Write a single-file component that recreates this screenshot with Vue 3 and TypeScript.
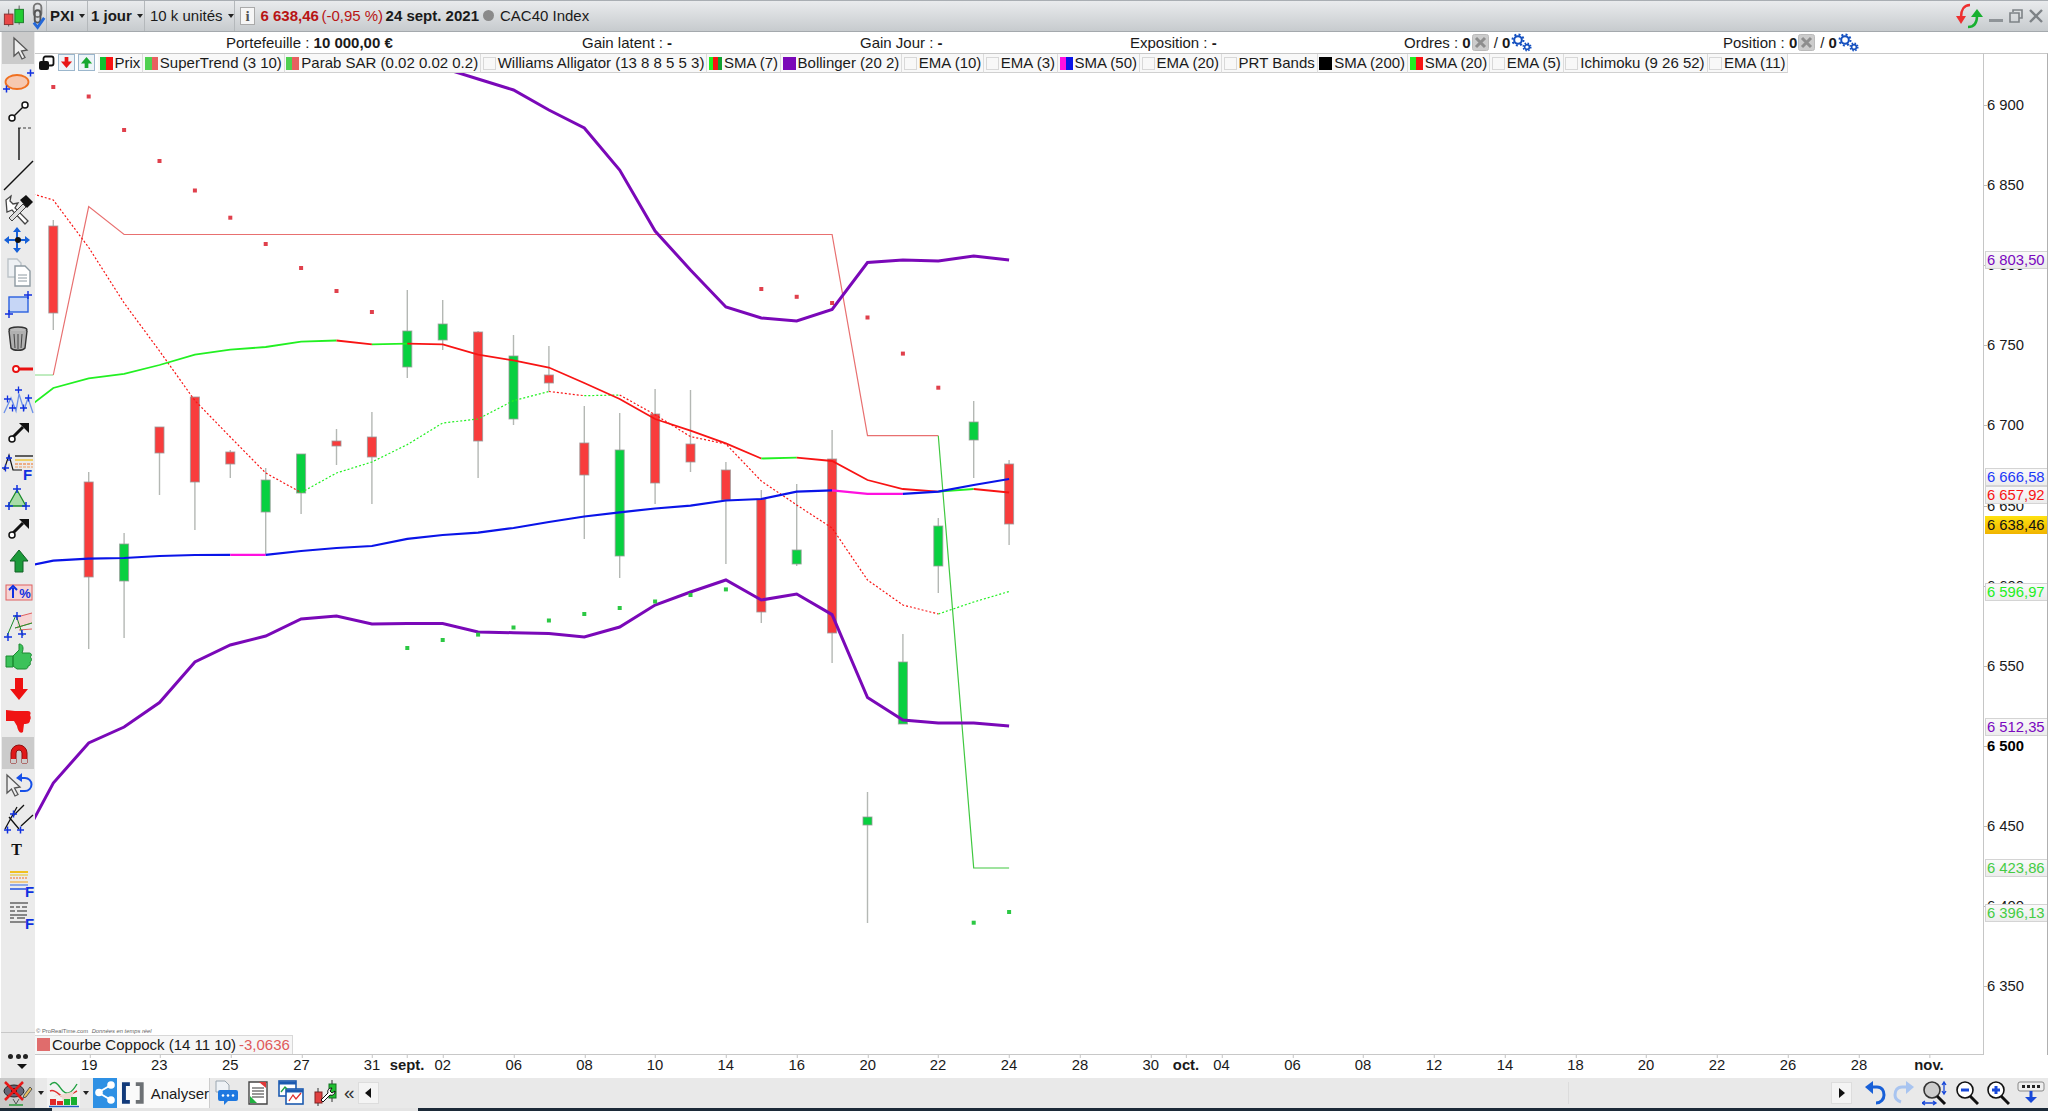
<template>
  <div class="screen">
    <div class="topbar">
      <div class="top-cell icons-cell">
        <svg width="24" height="30" viewBox="0 0 24 30"><path d="M7 8v18M18 4v20" stroke="#555" /><rect x="2.5" y="13" width="9" height="11" fill="#e84848" stroke="#8a3030" /><rect x="13.5" y="8" width="9" height="14" fill="#22cc33" stroke="#1c7a2a" /></svg>
        <svg class="link-ic" width="18" height="30" viewBox="0 0 18 30"><rect x="5" y="2" width="8" height="14" rx="4" fill="none" stroke="#777" stroke-width="2" /><rect x="6" y="9" width="6" height="13" rx="3" fill="none" stroke="#555" stroke-width="2" /><path d="M5 22l4 5 7-10" fill="none" stroke="#2468d8" stroke-width="3" /></svg>
      </div>
      <div class="top-cell sym"><b>PXI</b><i class="caret"></i></div>
      <div class="top-cell tf"><b>1 jour</b><i class="caret"></i></div>
      <div class="top-cell units">10 k unités<i class="caret"></i></div>
      <div class="quote">
        <span class="info">i</span>
        <b class="down">6 638,46</b>
        <span class="down pct">(-0,95 %)</span>
        <b>24 sept. 2021</b>
        <span class="dot"></span>
        <span>CAC40 Index</span>
      </div>
      <div class="win-btns">
        <svg width="27" height="28" viewBox="0 0 27 28"><path d="M14 3C8 3 5 8 5 15" fill="none" stroke="#ee3030" stroke-width="2.5" /><path d="M0 14h10l-5 8z" fill="#ee3030" /><path d="M12 25c6 0 9-4 9-11" fill="none" stroke="#18b030" stroke-width="2.5" /><path d="M15 15h12l-6-8z" fill="#18b030" /></svg>
        <svg width="14" height="14" viewBox="0 0 14 14"><rect y="10" width="14" height="3" fill="#8f9498" /></svg>
        <svg width="14" height="14" viewBox="0 0 14 14"><path d="M4 3V1h9v8h-3M1 4h9v9H1z" fill="none" stroke="#7d8286" stroke-width="1.6" /></svg>
        <svg width="14" height="14" viewBox="0 0 14 14"><path d="M1 1l12 12M13 1L1 13" stroke="#7d8286" stroke-width="2.4" /></svg>
      </div>
    </div>

    <div class="main">
      <div class="toolbar">
        <div class="tools">
          <div class="tool active"><svg viewBox="0 0 32 32"><path d="M12 6v18l4.500-4 3.500 7 3-1.500-3.500-6.500 5.500-1z" fill="#eee" stroke="#555" stroke-width="1.3" /></svg></div>
          <div class="tool"><svg viewBox="0 0 32 32"><ellipse cx="16" cy="18" rx="11.500" ry="7" fill="#f6c8b0" stroke="#f07020" stroke-width="1.800" /><path d="M26 9h7M29.500 5.500v7M2 25h7M5.500 21.500v7" stroke="#1030e0" stroke-width="1.500" /></svg></div>
          <div class="tool"><svg viewBox="0 0 32 32"><path d="M13 20l9-9" stroke="#111" stroke-width="1.500" /><circle cx="11" cy="22" r="3" fill="#fff" stroke="#111" stroke-width="1.500" /><circle cx="24" cy="9" r="3" fill="#fff" stroke="#111" stroke-width="1.500" /></svg></div>
          <div class="tool"><svg viewBox="0 0 32 32"><path d="M17 0h14" stroke="#777" stroke-width="1.400" stroke-dasharray="3 2" /><path d="M18 0v32" stroke="#111" stroke-width="1.400" /></svg></div>
          <div class="tool"><svg viewBox="0 0 32 32"><path d="M3 30L32 1" stroke="#111" stroke-width="1.400" /></svg></div>
          <div class="tool"><svg viewBox="0 0 32 32"><path d="M5 8l5-4-1 5 3 3 5-1-3 5 13 13-3 3L11 18l-5 2z" fill="#fff" stroke="#444" stroke-width="1.300" /><path d="M8 26L22 12l3 3-14 14z" fill="#ddd" stroke="#444" /><path d="M19 8l6-5 7 7-6 6z" fill="#111" /></svg></div>
          <div class="tool"><svg viewBox="0 0 32 32"><path d="M16 3l4 5h-8zM16 29l4-5h-8zM3 16l5-4v8zM29 16l-5-4v8z" fill="#1660d8" /><path d="M8 16h16M16 8v16" stroke="#1660d8" stroke-width="2" /><circle cx="17" cy="16" r="3" fill="#111" /></svg></div>
          <div class="tool"><svg viewBox="0 0 32 32"><path d="M7 3h9l4 4v14H7z" fill="#eef1f4" stroke="#bcc3c8" stroke-width="1.400" /><path d="M14 10h10l5 5v15H14z" fill="#fff" stroke="#8e9aa2" stroke-width="1.400" /><path d="M17 19h9M17 22h9M17 25h9" stroke="#8e9aa2" /></svg></div>
          <div class="tool"><svg viewBox="0 0 32 32"><rect x="8" y="8" width="19" height="15" fill="#c6d6f6" stroke="#2a60e0" stroke-width="1.400" /><path d="M23 6h8M27 2v8M4 25h8M8 21v8" stroke="#1030e0" stroke-width="1.400" /></svg></div>
          <div class="tool"><svg viewBox="0 0 32 32"><ellipse cx="17" cy="9" rx="9" ry="3" fill="#bbb" stroke="#333" stroke-width="1.400" /><path d="M8 10l2 17c2 3 12 3 14 0l2-17" fill="#b0b0b0" stroke="#333" stroke-width="1.400" /><path d="M13 13l1 14M17 13v15M21 13l-1 14" stroke="#444" /></svg></div>
          <div class="tool"><svg viewBox="0 0 32 32"><path d="M15 16h17" stroke="#e81010" stroke-width="3" /><circle cx="15" cy="16" r="3" fill="#fff" stroke="#e81010" stroke-width="1.800" /></svg></div>
          <div class="tool"><svg viewBox="0 0 32 32"><path d="M3 28L10 13l5 13 3-17 5 16 4-12 5 15" fill="none" stroke="#6c90e8" stroke-width="1.300" /><path d="M3 14h7M6.500 10.500v7M8 23h7M11.500 19.500v7M14 5h7M17.500 1.500v7M19 23h7M22.500 19.500v7M24 13h7M27.500 9.500v7" stroke="#1030e0" stroke-width="1.300" /></svg></div>
          <div class="tool"><svg viewBox="0 0 32 32"><path d="M12 20L22 10" stroke="#111" stroke-width="3" /><path d="M18 6h10v10z" fill="#111" /><circle cx="11" cy="22" r="3" fill="#fff" stroke="#111" stroke-width="1.500" /></svg></div>
          <div class="tool"><svg viewBox="0 0 32 32"><path d="M3 21L8 6l4 15h9" fill="none" stroke="#111" stroke-width="1.200" /><path d="M1 19h7M4.500 15.500v7M5 9h6M8 6v6" stroke="#1030e0" stroke-width="1.300" /><path d="M14 7h18" stroke="#111" stroke-width="1.300" /><path d="M14 11h18" stroke="#f0c020" stroke-width="1.300" /><path d="M14 15h18" stroke="#f07020" stroke-width="1.200" stroke-dasharray="3 1" /><path d="M14 18h18" stroke="#f0a060" stroke-width="1.200" stroke-dasharray="3 1" /><text x="22" y="31" class="f-mark">F</text></svg></div>
          <div class="tool"><svg viewBox="0 0 32 32"><path d="M16 9l9 16H7z" fill="#a8dca8" stroke="#1a8a2a" stroke-width="1.300" /><path d="M12 8h8M16 4v8M4 25h8M8 21v8M21 25h8M25 21v8" stroke="#1030e0" stroke-width="1.500" /></svg></div>
          <div class="tool"><svg viewBox="0 0 32 32"><path d="M12 20L22 10" stroke="#111" stroke-width="3" /><path d="M18 6h10v10z" fill="#111" /><circle cx="11" cy="22" r="3" fill="#fff" stroke="#111" stroke-width="1.500" /></svg></div>
          <div class="tool"><svg viewBox="0 0 32 32"><path d="M18 5l9 11h-5v11h-8V16H9z" fill="#1c9a3a" stroke="#106024" /></svg></div>
          <div class="tool"><svg viewBox="0 0 32 32"><rect x="5" y="8" width="26" height="15" fill="#f6d4d4" stroke="#e06060" stroke-width="1" /><path d="M12 21V11" stroke="#1030e0" stroke-width="2" /><path d="M8 13l4-4 4 4" fill="none" stroke="#1030e0" stroke-width="2" /><text x="24" y="21" class="pct-mark">%</text></svg></div>
          <div class="tool"><svg viewBox="0 0 32 32"><path d="M16 8l15-4v10L16 20z" fill="#f6d4d4" /><path d="M16 8l15-4M14 19l17-5M18 21l13-1" stroke="#e06060" /><path d="M14 19l17-5" stroke="#1a9a2a" /><path d="M6 27L15 6l7 21" fill="none" stroke="#1a8a2a" /><path d="M12 7h8M16 3v8M3 28h8M7 24v8M17 25h8M21 21v8" stroke="#1030e0" stroke-width="1.400" /></svg></div>
          <div class="tool"><svg viewBox="0 0 32 32"><path d="M5 15h7v11H5zM12 15l6-6V3c4 0 5 4 3 9h7c3 0 3 3 1 4 2 1 2 4 0 5 1 2 0 4-2 4 0 2-1 3-3 3H16l-4-3z" fill="#3cc25a" stroke="#1a8a30" /></svg></div>
          <div class="tool"><svg viewBox="0 0 32 32"><path d="M18 27l9-11h-5V5h-8v11H9z" fill="#ee1010" /></svg></div>
          <div class="tool"><svg viewBox="0 0 32 32"><path d="M5 5l9 1 13 0c3 0 3 3 2 4 1 2 1 4 0 5 0 3-2 4-6 4l-1 8c-3 2-5-1-6-6l-3-5H5z" fill="#f01414" /></svg></div>
          <div class="tool active"><svg viewBox="0 0 32 32"><path d="M9 26V16a8 8 0 0 1 16 0v10h-5V16a3 3 0 0 0-6 0v10z" fill="#e01818" stroke="#901010" /><path d="M9 22h5v4H9zM20 22h5v4h-5z" fill="#ccc" /></svg></div>
          <div class="tool"><svg viewBox="0 0 32 32"><path d="M6 6v18l4.500-4 3.500 7 3-1.500-3.500-6.500 5.500-1z" fill="#eee" stroke="#555" stroke-width="1.300" /><path d="M18 9h6a6 6 0 0 1 0 13h-5" fill="none" stroke="#1650e8" stroke-width="2" /><path d="M21 4l-6 5 6 4z" fill="#1650e8" /></svg></div>
          <div class="tool"><svg viewBox="0 0 32 32"><path d="M4 27L16 5M8 15l10 12M12 14L23 3M20 24L32 13" stroke="#111" stroke-width="1.300" /><path d="M9 12h7M12.500 8.500v7M3 28h7M6.500 24.500v7M16 28h7M19.500 24.500v7" stroke="#1030e0" stroke-width="1.500" /></svg></div>
          <div class="tool"><span class="t-glyph">T</span></div>
          <div class="tool"><svg viewBox="0 0 32 32"><path d="M9 6h18" stroke="#f0c020" stroke-width="2" /><path d="M9 9h18" stroke="#e8d060" stroke-width="1.500" /><path d="M9 12h18" stroke="#f07020" stroke-width="1.200" stroke-dasharray="2 1" /><path d="M9 16h18" stroke="#f0b040" stroke-width="1.200" /><path d="M9 19h18" stroke="#6c90e8" stroke-width="1.500" /><path d="M9 23h16" stroke="#2050e0" stroke-width="1.500" /><text x="24" y="31" class="f-mark">F</text></svg></div>
          <div class="tool"><svg viewBox="0 0 32 32"><path d="M9 5h18M9 9h4M15 9h4M21 9h5M9 13h5M16 13h10M9 17h17M9 20h4M16 20h8M9 24h16" stroke="#222" stroke-width="1.200" /><text x="24" y="31" class="f-mark">F</text></svg></div>
        </div>
        <div class="more">
          <div class="more-dots"><i></i><i></i><i></i></div>
          <i class="more-caret"></i>
        </div>
      </div>

      <div class="content">
        <div class="stats">
          <div class="stat">Portefeuille : <b>10 000,00 €</b></div>
          <div class="stat">Gain latent : <b>-</b></div>
          <div class="stat">Gain Jour : <b>-</b></div>
          <div class="stat">Exposition : <b>-</b></div>
          <div class="stat">Ordres : <b>0</b>
            <svg class="xbox" width="17" height="17" viewBox="0 0 17 17"><rect x=".5" y=".5" width="16" height="16" rx="2" fill="#ccc" stroke="#bbb" /><path d="M4 4l9 9M13 4l-9 9" stroke="#8e8e8e" stroke-width="3" /></svg>
            <span class="slash">/ <b>0</b></span>
            <svg width="22" height="19" viewBox="0 0 22 19"><circle cx="8" cy="7" r="3.800" fill="none" stroke="#1450c0" stroke-width="2" /><circle cx="8" cy="7" r="5.500" fill="none" stroke="#1450c0" stroke-width="2" stroke-dasharray="2 2.300" /><circle cx="17" cy="14" r="2.400" fill="none" stroke="#1450c0" stroke-width="1.600" /><circle cx="17" cy="14" r="3.800" fill="none" stroke="#1450c0" stroke-width="1.500" stroke-dasharray="1.500 1.500" /></svg>
          </div>
          <div class="stat">Position : <b>0</b>
            <svg class="xbox" width="17" height="17" viewBox="0 0 17 17"><rect x=".5" y=".5" width="16" height="16" rx="2" fill="#ccc" stroke="#bbb" /><path d="M4 4l9 9M13 4l-9 9" stroke="#8e8e8e" stroke-width="3" /></svg>
            <span class="slash">/ <b>0</b></span>
            <svg width="22" height="19" viewBox="0 0 22 19"><circle cx="8" cy="7" r="3.800" fill="none" stroke="#1450c0" stroke-width="2" /><circle cx="8" cy="7" r="5.500" fill="none" stroke="#1450c0" stroke-width="2" stroke-dasharray="2 2.300" /><circle cx="17" cy="14" r="2.400" fill="none" stroke="#1450c0" stroke-width="1.600" /><circle cx="17" cy="14" r="3.800" fill="none" stroke="#1450c0" stroke-width="1.500" stroke-dasharray="1.500 1.500" /></svg>
          </div>
        </div>

        <div class="work">
          <div class="chart-col">
            <div class="legend">
              <svg class="win-ic" width="17" height="17" viewBox="0 0 17 17"><rect x="5.500" y="1.500" width="10" height="9" rx="2" fill="#fff" stroke="#111" stroke-width="1.800" /><rect x="1" y="6" width="10" height="9" rx="2" fill="#111" /></svg>
              <span class="leg-btn"><svg width="14" height="14" viewBox="0 0 14 14"><path d="M5 1h4v5h4l-6 7-6-7h4z" fill="#e81818" /></svg></span>
              <span class="leg-btn"><svg width="14" height="14" viewBox="0 0 14 14"><path d="M5 13h4V8h4L7 1 1 8h4z" fill="#18a830" /></svg></span>
              <div v-for="item in legendItems" :key="item.label" class="leg-item">
                <span class="swatch" :class="{ empty: !item.swatch }" :style="{ background: item.swatch }"></span>{{ item.label }}
              </div>
            </div>
            <div class="pane">
              <svg class="plot" width="1948" height="981" viewBox="35 73 1948 981">
                <g v-for="(c, i) in candles" :key="i">
                  <path :d="`M${xOf(i)} ${c[0]}V${c[3]}`" stroke="#b4b8b4" stroke-width="1.400" />
                  <rect
                    :x="xOf(i) - 4.500"
                    :y="c[1]"
                    width="9"
                    :height="c[2] - c[1]"
                    :fill="c[4] === 'r' ? '#f83c3c' : '#08d040'"
                    stroke="#9a9a9a"
                    stroke-opacity=".8"
                  />
                </g>
                <polyline
                  v-for="(s, i) in lines"
                  :key="'l' + i"
                  :points="s.points"
                  :stroke="s.color"
                  :stroke-width="s.width"
                  :stroke-dasharray="s.dash"
                  fill="none"
                />
                <rect
                  v-for="(d, i) in sarDots"
                  :key="'d' + i"
                  :x="xOf(d[0]) - 2"
                  :y="d[1] - 2"
                  width="4"
                  height="4"
                  :fill="d[2] === 'r' ? '#e0404c' : '#2cc844'"
                />
              </svg>
              <div class="credit">© ProRealTime.com <em>Données en temps réel</em></div>
              <div class="coppock">
                <span class="cop-swatch"></span>Courbe Coppock (14 11 10)<span class="cop-val">-3,0636</span>
              </div>
            </div>
          </div>
          <div class="axis">
            <div v-for="p in priceTicks" :key="p.label" class="tick" :class="{ strong: p.strong }" :style="{ top: p.y - 54 + 'px' }">
              {{ p.label }}
            </div>
            <div
              v-for="t in priceTags"
              :key="t.label"
              class="tag"
              :class="{ last: t.last }"
              :style="{ top: t.y - 54 + 'px', color: t.color }"
            >
              {{ t.label }}
            </div>
          </div>
        </div>

        <div class="dates">
          <span v-for="d in dates" :key="d.x" class="date" :class="{ month: d.month }" :style="{ left: d.x - 35 + 'px' }">{{ d.label }}</span>
        </div>
      </div>
    </div>

    <div class="bottombar">
      <div class="bot-eye">
        <svg width="33" height="29" viewBox="0 0 33 29"><ellipse cx="13" cy="12" rx="10" ry="6" fill="#667" stroke="#222" /><circle cx="13" cy="12" r="3" fill="#111" /><path d="M4 3l18 18M22 3L4 21" stroke="#e81818" stroke-width="2.500" /><path d="M23 16l6-8 2 2-6 8-3 1z" fill="#e8c060" stroke="#555" /><path d="M8 26h14" stroke="#2a9a3a" stroke-width="1.500" /><path d="M12 20l3 5 3-5" fill="none" stroke="#555" /></svg>
      </div>
      <i class="caret bot-caret"></i>
      <div class="bot-chart">
        <svg width="30" height="29" viewBox="0 0 30 29"><path d="M1 6c6-7 9 2 13 6s8 3 14-7" fill="none" stroke="#1fa040" stroke-width="1.400" /><path d="M1 12c6-3 10 7 15 6s8-4 12-6" fill="none" stroke="#e03030" stroke-width="1.400" /><path d="M4 18c5-4 9-2 10 4h10c-1-6 0-8 2-10" fill="#f0d8d0" /><rect x="1" y="20" width="6" height="6" fill="#e02828" /><rect x="8" y="22" width="6" height="4" fill="#e02828" /><rect x="15" y="20" width="6" height="6" fill="#18b030" /><rect x="22" y="18" width="6" height="8" fill="#18b030" /><path d="M0 27.500h30" stroke="#2060c0" stroke-width="1.500" /></svg>
      </div>
      <i class="caret bot-caret wide"></i>
      <div class="bot-share">
        <svg width="24" height="29" viewBox="0 0 24 29"><path d="M6 14L18 7M6 15l12 7" stroke="#fff" stroke-width="2" /><circle cx="6" cy="14.500" r="3.800" fill="#fff" /><circle cx="18" cy="7" r="3.800" fill="#fff" /><circle cx="18" cy="22" r="3.800" fill="#fff" /></svg>
      </div>
      <div class="bot-analyse">
        <svg width="26" height="26" viewBox="0 0 26 26"><path d="M10 2H2v22h8v-4H6V6h4z" fill="#123a7a" /><path d="M16 2h8v22h-8v-4h4V6h-4z" fill="#6c7074" /></svg>
        <span>Analyser</span>
      </div>
      <div class="bot-icons">
        <svg width="24" height="26" viewBox="0 0 24 26"><path d="M2 1h9l4 4v7H2z" fill="#eef2f6" stroke="#9aa6b0" /><path d="M6 10h16a2 2 0 0 1 2 2v7a2 2 0 0 1-2 2h-8l-4 4v-4H6a2 2 0 0 1-2-2v-7a2 2 0 0 1 2-2z" fill="#1e78e0" /><circle cx="9" cy="15.500" r="1.300" fill="#fff" /><circle cx="14" cy="15.500" r="1.300" fill="#fff" /><circle cx="19" cy="15.500" r="1.300" fill="#fff" /></svg>
        <svg width="20" height="26" viewBox="0 0 20 26"><path d="M1 2h18v22H1z" fill="#fff" stroke="#444" stroke-width="1.400" /><path d="M4 8h12M4 11h12M4 14h12M4 17h12" stroke="#333" stroke-width="1.200" /><path d="M11 2h7v6z" fill="#e03838" /><path d="M2 23v-7l7 7z" fill="#20b040" /></svg>
        <svg width="26" height="26" viewBox="0 0 26 26"><rect x="1" y="1" width="17" height="15" fill="#fff" stroke="#1c5ab0" stroke-width="1.600" /><path d="M1 3h17" stroke="#1c5ab0" stroke-width="3" /><rect x="8" y="9" width="17" height="15" fill="#fff" stroke="#1c5ab0" stroke-width="1.600" /><path d="M8 11h17" stroke="#1c5ab0" stroke-width="3" /><path d="M11 21l4-6 3 4 5-6" fill="none" stroke="#e03030" stroke-width="1.300" /><path d="M3 12l4-5 2 2" fill="none" stroke="#20a040" stroke-width="1.300" /></svg>
        <svg width="24" height="26" viewBox="0 0 24 26"><rect x="1" y="12" width="7" height="11" fill="#e04040" stroke="#802020" /><rect x="15" y="4" width="7" height="14" fill="#20c030" stroke="#107020" /><path d="M18 0v4M18 18v4M4 8v4M4 23v3" stroke="#333" /><path d="M7 20l7-7c-1-3 1-5 4-5l-2 3 2 2 3-2c0 3-2 5-5 4l-7 7z" fill="#fff" stroke="#111" /></svg>
      </div>
      <span class="chev">«</span>
      <div class="scrollbar">
        <span class="scroll-btn"><i class="arrow-left"></i></span>
        <div class="track"><div class="thumb-mark"></div></div>
        <span class="scroll-btn"><i class="arrow-right"></i></span>
      </div>
      <div class="bot-right">
        <svg width="22" height="24" viewBox="0 0 22 24"><path d="M4 6h9c5 0 7 4 7 8s-3 8-8 8" fill="none" stroke="#1860d8" stroke-width="3" /><path d="M9 0L1 6l8 7z" fill="#1860d8" /></svg>
        <svg width="22" height="24" viewBox="0 0 22 24"><path d="M18 6H9c-5 0-7 4-7 8s3 6 6 7" fill="none" stroke="#a8c4f0" stroke-width="3" /><path d="M13 0l8 6-8 7z" fill="#a8c4f0" /></svg>
        <svg width="26" height="26" viewBox="0 0 26 26"><circle cx="10" cy="10" r="8" fill="#ccc" stroke="#333" stroke-width="1.600" /><path d="M15 16l8 8" stroke="#111" stroke-width="3" /><path d="M22 3v10M20 5l2-3 2 3M20 11l2 3 2-3M1 23h12M3 21l-3 2 3 2M11 21l3 2-3 2" fill="none" stroke="#1848d8" stroke-width="1.300" /></svg>
        <svg width="24" height="26" viewBox="0 0 24 26"><circle cx="10" cy="10" r="8" fill="#fff" stroke="#111" stroke-width="1.600" /><path d="M6 10h8" stroke="#1848d8" stroke-width="3" /><path d="M15 16l8 8" stroke="#111" stroke-width="3" /></svg>
        <svg width="24" height="26" viewBox="0 0 24 26"><circle cx="10" cy="10" r="8" fill="#fff" stroke="#111" stroke-width="1.600" /><path d="M6 10h8M10 6v8" stroke="#1848d8" stroke-width="3" /><path d="M15 16l8 8" stroke="#111" stroke-width="3" /></svg>
        <svg width="28" height="26" viewBox="0 0 28 26"><rect x="1" y="2" width="26" height="9" rx="2" fill="#eee" stroke="#888" /><path d="M5 5h3v3H5zM10 5h3v3h-3zM15 5h3v3h-3zM20 5h3v3h-3z" fill="#222" /><path d="M14 11v7" stroke="#1848d8" stroke-width="3" /><path d="M8 17h12l-6 6z" fill="#1848d8" /></svg>
      </div>
    </div>
    <div class="strip"><div class="strip-light"></div></div>
  </div>
</template>

<script setup lang="ts">
type Candle = [number, number, number, number, 'r' | 'g']

function xOf(i: number) {
  return 53.3 + 35.4 * i
}

// wick top, body top, body bottom, wick bottom
const candles: Candle[] = [
  [220, 226, 313, 330, 'r'],
  [472, 482, 577, 649, 'r'],
  [533, 544, 581, 638, 'g'],
  [427, 427, 453, 495, 'r'],
  [397, 397, 482, 530, 'r'],
  [450, 452, 464, 478, 'r'],
  [468, 480, 512, 554, 'g'],
  [454, 454, 493, 514, 'g'],
  [429, 441, 446, 465, 'r'],
  [412, 437, 457, 504, 'r'],
  [290, 331, 367, 378, 'g'],
  [300, 324, 340, 350, 'g'],
  [331, 332, 441, 478, 'r'],
  [335, 356, 419, 425, 'g'],
  [346, 375, 383, 391, 'r'],
  [406, 443, 475, 539, 'r'],
  [413, 450, 556, 578, 'g'],
  [389, 414, 483, 504, 'r'],
  [390, 444, 462, 472, 'r'],
  [462, 470, 500, 564, 'r'],
  [490, 499, 612, 623, 'r'],
  [484, 550, 564, 566, 'g'],
  [430, 459, 633, 663, 'r'],
  [792, 817, 825, 923, 'g'],
  [634, 662, 724, 724, 'g'],
  [518, 526, 566, 593, 'g'],
  [401, 422, 440, 478, 'g'],
  [460, 464, 524, 545, 'r'],
]

const GREEN = '#22f022'
const RED = '#f81414'
const BLUE = '#0a14e8'
const PINK = '#ff10e0'
const PURPLE = '#7a08b8'

function seg(color: string, start: number, ys: number[], width: number, dash?: string) {
  return {
    color,
    width,
    dash,
    points: ys.map((y, k) => `${xOf(start + k)},${y}`).join(' '),
  }
}

const lines = [
  // SuperTrend
  seg('#80d880', -1, [375, 375], 1),
  seg('#e87070', 0, [375, 206.6, 234.5, ...Array(20).fill(234.5), 435.7, 435.7, 435.7], 1.2),
  seg('#40c840', 25, [435.7, 868, 868], 1.2),
  // SMA 7
  seg(RED, -1, [189.5, 200, 247.5, 303, 351, 400.6, 437, 473, 492.5], 1.2, '2 2'),
  seg(GREEN, 7, [492.5, 473, 462, 444.6, 423, 419, 400.6, 391.5], 1.2, '2 2'),
  seg(RED, 14, [391.5, 395.7], 1.2, '2 2'),
  seg(GREEN, 15, [395.7, 395], 1.2, '2 2'),
  seg(RED, 16, [395, 414.7, 436.6, 444, 481, 505, 528, 580, 605, 614], 1.2, '2 2'),
  seg(GREEN, 25, [614, 602, 591.5], 1.2, '2 2'),
  // SMA 20
  seg(GREEN, -1, [415.4, 388, 378.4, 373.8, 365, 354.7, 349.7, 347, 341.7, 340.5], 1.8),
  seg(RED, 8, [340.5, 344.3], 1.8),
  seg(GREEN, 9, [344.3, 343.6], 1.8),
  seg(RED, 10, [343.6, 344.3, 354.7, 360.4, 367.5, 383, 399, 419, 430.7, 443.3, 458.5], 1.8),
  seg(GREEN, 20, [458.5, 457.6], 1.8),
  seg(RED, 21, [457.6, 461, 480, 489, 491.7], 1.8),
  seg(GREEN, 25, [491.7, 489], 1.8),
  seg(RED, 26, [489, 492.5], 1.8),
  // SMA 50
  seg(BLUE, -1, [568, 560.6, 558.7, 558, 556, 555, 554.8], 2.2),
  seg(PINK, 5, [554.8, 554.8], 2.2),
  seg(BLUE, 6, [554.8, 551, 548, 546, 538.8, 535, 532.6, 528, 522, 516.5, 512.3, 508.5, 505.6, 500.5, 499, 491.7, 490.4], 2.2),
  seg(PINK, 22, [490.4, 493.8, 493.8], 2.2),
  seg(BLUE, 24, [493.8, 491.7, 485, 479], 2.2),
  // Bollinger
  seg(PURPLE, 11, [68, 79, 90, 110, 128, 170, 231, 270, 307, 318, 321, 309.5, 262.5, 260, 261, 256, 260], 3),
  seg(PURPLE, -1, [849, 783, 743, 727, 702.6, 662, 645, 636, 619, 616, 624, 623.6, 623.6, 632, 632.7, 633.5, 637, 627, 605, 592, 580, 600, 594, 614.6, 697.5, 720, 723, 723, 726], 3),
]

const sarDots: [number, number, 'r' | 'g'][] = [
  [0, 87, 'r'], [1, 96.5, 'r'], [2, 130, 'r'], [3, 161, 'r'], [4, 190.5, 'r'],
  [5, 217.7, 'r'], [6, 244, 'r'], [7, 268, 'r'], [8, 291, 'r'], [9, 312, 'r'],
  [10, 648, 'g'], [11, 640, 'g'], [12, 634.6, 'g'], [13, 627.5, 'g'], [14, 620.5, 'g'],
  [15, 614, 'g'], [16, 608, 'g'], [17, 601.5, 'g'], [18, 595, 'g'], [19, 589.4, 'g'],
  [20, 289, 'r'], [21, 296.8, 'r'], [22, 303, 'r'], [23, 317.5, 'r'], [24, 353.6, 'r'], [25, 387.7, 'r'],
  [26, 922.7, 'g'], [27, 912, 'g'],
]

const legendItems = [
  { label: 'Prix', swatch: 'linear-gradient(90deg,#10c030 50%,#f81414 50%)' },
  { label: 'SuperTrend (3 10)', swatch: 'linear-gradient(90deg,#50d050 50%,#e86060 50%)' },
  { label: 'Parab SAR (0.02 0.02 0.2)', swatch: 'linear-gradient(90deg,#50d050 50%,#e86060 50%)' },
  { label: 'Williams Alligator (13 8 8 5 5 3)', swatch: '' },
  { label: 'SMA (7)', swatch: 'linear-gradient(90deg,#22f022 33%,#f81414 33%,#f81414 66%,#10a030 66%)' },
  { label: 'Bollinger (20 2)', swatch: '#7a08b8' },
  { label: 'EMA (10)', swatch: '' },
  { label: 'EMA (3)', swatch: '' },
  { label: 'SMA (50)', swatch: 'linear-gradient(90deg,#ff10e0 50%,#0a14e8 50%)' },
  { label: 'EMA (20)', swatch: '' },
  { label: 'PRT Bands', swatch: '' },
  { label: 'SMA (200)', swatch: '#000' },
  { label: 'SMA (20)', swatch: 'linear-gradient(90deg,#22f022 50%,#f81414 50%)' },
  { label: 'EMA (5)', swatch: '' },
  { label: 'Ichimoku (9 26 52)', swatch: '' },
  { label: 'EMA (11)', swatch: '' },
]

const priceTicks = [6900, 6850, 6800, 6750, 6700, 6650, 6600, 6550, 6500, 6450, 6400, 6350].map((v) => ({
  label: `6 ${String(v).slice(1)}`,
  y: 105 + ((6900 - v) / 50) * 80.1,
  strong: v === 6500,
}))

const priceTags = [
  { label: '6 803,50', y: 259.5, color: '#7a08c0' },
  { label: '6 666,58', y: 477, color: '#1c38f8' },
  { label: '6 657,92', y: 495, color: '#f81414' },
  { label: '6 638,46', y: 525, color: '#111', last: true },
  { label: '6 596,97', y: 591.5, color: '#22ee22' },
  { label: '6 512,35', y: 726.5, color: '#7a08c0' },
  { label: '6 423,86', y: 868, color: '#44cc44' },
  { label: '6 396,13', y: 912.5, color: '#44cc44' },
]

const dateLabels: [string, number, boolean?][] = [
  ['19', 89.3], ['23', 159.3], ['25', 230.3], ['27', 301.5], ['31', 372], ['sept.', 407, true], ['02', 442.7],
  ['06', 513.7], ['08', 584.4], ['10', 655], ['14', 725.7], ['16', 796.8], ['20', 867.8], ['22', 938], ['24', 1009],
  ['28', 1080], ['30', 1150.8], ['oct.', 1186, true], ['04', 1221.6], ['06', 1292.4], ['08', 1363], ['12', 1434],
  ['14', 1505], ['18', 1575.6], ['20', 1646], ['22', 1717], ['26', 1788], ['28', 1859], ['nov.', 1929, true],
]
const dates = dateLabels.map(([label, x, month]) => ({ label, x, month }))
</script>

<style>
html,
body {
  margin: 0;
  background: #fff;
  overflow: hidden;
}
</style>

<style scoped>
.screen {
  width: 2048px;
  height: 1111px;
  display: flex;
  flex-direction: column;
  font-family: "Liberation Sans", Arial, sans-serif;
  font-size: 15px;
  color: #1a1a1a;
  background: #fff;
}

/* top bar */
.topbar {
  height: 32px;
  box-sizing: border-box;
  display: flex;
  align-items: center;
  border-top: 1px solid #a9aeb3;
  border-bottom: 1px solid #a4a9ad;
  background: linear-gradient(#e9ebed, #c7cbce);
  flex: none;
  line-height: 26px;
}
.top-cell {
  height: 100%;
  display: flex;
  align-items: center;
  box-sizing: border-box;
  border-right: 1px solid #b4b8bb;
  padding-bottom: 1px;
}
.icons-cell {
  width: 47px;
  gap: 4px;
  padding-left: 2px;
}
.sym {
  width: 41px;
  padding-left: 3px;
}
.tf {
  width: 57px;
  padding-left: 3px;
}
.units {
  width: 90px;
  padding-left: 5px;
}
.caret {
  width: 0;
  height: 0;
  margin-left: 5px;
  border-left: 3.5px solid transparent;
  border-right: 3.5px solid transparent;
  border-top: 4px solid #222;
}
.quote {
  display: flex;
  align-items: center;
  gap: 2.5px;
  padding: 0 0 1px 5px;
}
.info {
  width: 15px;
  height: 18px;
  margin-right: 3px;
  box-sizing: border-box;
  border: 1px solid #aaa;
  background: #f6f6f6;
  color: #555;
  font-family: "Liberation Serif", serif;
  font-weight: bold;
  text-align: center;
  line-height: 16px;
}
.quote .down {
  color: #b81414;
}
.dot {
  width: 11px;
  height: 11px;
  margin: 0 3px 0 2px;
  border-radius: 50%;
  background: #8a8a8a;
}
.win-btns {
  margin-left: auto;
  padding-right: 5px;
  display: flex;
  align-items: center;
  gap: 6px;
}

/* layout */
.main {
  height: 1046px;
  flex: none;
  display: flex;
}
.toolbar {
  width: 35px;
  flex: none;
  display: flex;
  flex-direction: column;
  box-sizing: border-box;
  background: #ebebeb;
  border-left: 1px solid #fff;
}
.tools {
  flex: 1;
  margin-left: -1px;
}
.tool {
  height: 32.07px;
  display: flex;
  align-items: center;
  justify-content: center;
  padding-right: 2px;
}
.tool svg {
  width: 32px;
  height: 32px;
  flex: none;
  overflow: visible;
}
.tool.active {
  background: #cbcbcb;
  margin: 0 1px 0 2px;
  padding-right: 0;
}
.f-mark {
  font-family: "Liberation Sans", sans-serif;
  font-weight: bold;
  font-size: 15px;
  fill: #1030e0;
}
.pct-mark {
  font-family: "Liberation Sans", sans-serif;
  font-size: 13px;
  font-weight: bold;
  fill: #1030e0;
  text-anchor: middle;
}
.t-glyph {
  font-family: "Liberation Serif", serif;
  font-weight: bold;
  font-size: 16px;
  color: #111;
}
.more {
  height: 46px;
  box-sizing: border-box;
  border-top: 1px solid #c8c8c8;
  padding-top: 21px;
  display: flex;
  flex-direction: column;
  align-items: center;
  gap: 5px;
}
.more-dots {
  display: flex;
  gap: 2.5px;
}
.more-dots i {
  width: 5px;
  height: 5px;
  border-radius: 50%;
  background: #222;
}
.more-caret {
  margin-left: 8px;
  border-left: 5px solid transparent;
  border-right: 5px solid transparent;
  border-top: 5px solid #111;
}
.content {
  flex: 1;
  display: flex;
  flex-direction: column;
  min-width: 0;
}

/* portfolio row */
.stats {
  height: 21px;
  flex: none;
  display: grid;
  grid-template-columns: 356px 278px 270px 274px 319px 1fr;
  padding-left: 191px;
  align-items: center;
}
.stat {
  display: flex;
  align-items: center;
  white-space: pre;
}
.xbox {
  margin-left: 1px;
}
.slash {
  margin-left: 5px;
}

/* chart */
.work {
  height: 1002px;
  flex: none;
  display: flex;
}
.chart-col {
  width: 1948px;
  display: flex;
  flex-direction: column;
}
.legend {
  height: 20px;
  box-sizing: border-box;
  flex: none;
  display: flex;
  align-items: stretch;
  border-top: 1px solid #c8c8c8;
  padding-left: 3px;
  white-space: nowrap;
}
.win-ic {
  margin: 1px 3px 0 0;
}
.leg-btn {
  width: 17px;
  height: 17px;
  margin-right: 3px;
  box-sizing: border-box;
  border: 1px solid #9bb6cc;
  background: #eef4f8;
  display: flex;
  align-items: center;
  justify-content: center;
}
.leg-btn svg {
  width: 13px;
  height: 13px;
}
.leg-item {
  height: 19px;
  display: flex;
  align-items: center;
  box-sizing: border-box;
  padding: 0 2px 0 1.5px;
  border-right: 1px solid #dcdcdc;
  border-bottom: 1px solid #d0d0d0;
  background: #f8f8f8;
  line-height: 18px;
}
.swatch {
  width: 13px;
  height: 13px;
  margin-right: 2px;
  box-sizing: border-box;
}
.swatch.empty {
  background: #f8f8f8;
  border: 1px solid #d8d8d8;
}
.pane {
  position: relative;
  flex: 1;
  border-bottom: 1px solid #c8c8c8;
  overflow: hidden;
}
.plot {
  display: block;
}
.credit {
  position: absolute;
  left: 1px;
  bottom: 18px;
  font-size: 5.8px;
  line-height: 9px;
  color: #666;
  white-space: pre;
}
.credit em {
  margin-left: 2px;
}
.coppock {
  position: absolute;
  left: 0;
  bottom: 0;
  height: 19px;
  display: flex;
  align-items: center;
  padding: 0 2px 1px;
  box-sizing: border-box;
  background: #f6f6f6;
  border-top: 1px solid #d8d8d8;
  border-right: 1px solid #d8d8d8;
  white-space: nowrap;
}
.cop-swatch {
  width: 13px;
  height: 13px;
  margin-right: 2px;
  background: #e06c6c;
}
.cop-val {
  margin-left: 3px;
  color: #e05a5a;
}

/* price axis */
.axis {
  position: relative;
  width: 65px;
  flex: none;
  box-sizing: border-box;
  border-left: 1px solid #c6c6c6;
  border-right: 1px solid #b0b0b0;
  border-top: 1px solid #c8c8c8;
  overflow: hidden;
}
.tick {
  position: absolute;
  left: 3px;
  transform: translateY(-50%);
  font-size: 14.8px;
  line-height: 18px;
  white-space: pre;
}
.tick::before {
  content: "";
  position: absolute;
  left: -3px;
  top: 9px;
  width: 3px;
  height: 1px;
  background: #bbb;
}
.tick.strong {
  font-weight: bold;
  color: #000;
}
.tag {
  position: absolute;
  left: 1px;
  right: 0;
  height: 18px;
  box-sizing: border-box;
  padding-left: 1px;
  transform: translateY(-50%);
  border: 1px solid #d4d4d4;
  border-right: 0;
  background: linear-gradient(#fafafa, #ececec);
  font-size: 14.8px;
  line-height: 17px;
  white-space: pre;
}
.tag.last {
  border: 0;
  padding-left: 2px;
  line-height: 18px;
  background: linear-gradient(#ffe210, #f0b400);
}

/* date axis */
.dates {
  position: relative;
  height: 23px;
  flex: none;
}
.date {
  position: absolute;
  top: 1px;
  transform: translateX(-50%);
  font-size: 14.8px;
  line-height: 18px;
}
.date::before {
  content: "";
  position: absolute;
  left: 50%;
  top: -1px;
  width: 1px;
  height: 3px;
  background: #c4c4c4;
}
.date.month {
  font-weight: bold;
}

/* bottom toolbar */
.bottombar {
  height: 30px;
  flex: none;
  display: flex;
  align-items: center;
  background: #e9e9e9;
  box-sizing: border-box;
}
.bottombar > * {
  flex-shrink: 0;
}
.bot-eye {
  width: 35px;
  height: 100%;
  background: #c8c8c8;
  display: flex;
  align-items: center;
  justify-content: center;
}
.bot-caret {
  width: 0;
  margin: 0 3px;
}
.bot-caret.wide {
  margin: 0 4px 0 3px;
}
.bot-chart {
  width: 33px;
  height: 100%;
  background: #f2f2f2;
  display: flex;
  align-items: center;
  justify-content: center;
}
.bot-share {
  width: 24px;
  height: 100%;
  background: #2e90e4;
}
.bot-analyse {
  width: 93px;
  height: 100%;
  box-sizing: border-box;
  padding-left: 3px;
  display: flex;
  align-items: center;
  gap: 5px;
  background: #fafafa;
  border-right: 1px solid #ccc;
}
.bot-icons {
  display: flex;
  align-items: center;
  gap: 10px;
  padding-left: 4px;
}
.chev {
  margin-left: 6px;
  font-size: 19px;
  line-height: 20px;
  color: #333;
}
.scrollbar {
  flex: 1;
  height: 22px;
  margin-left: 3px;
  display: flex;
}
.scroll-btn {
  width: 21px;
  box-sizing: border-box;
  flex: none;
  background: #f4f4f4;
  border: 1px solid #ddd;
  display: flex;
  align-items: center;
  justify-content: center;
}
.arrow-left {
  border-top: 5px solid transparent;
  border-bottom: 5px solid transparent;
  border-right: 6px solid #111;
}
.arrow-right {
  border-top: 5px solid transparent;
  border-bottom: 5px solid transparent;
  border-left: 6px solid #111;
}
.track {
  flex: 1;
  position: relative;
}
.thumb-mark {
  position: absolute;
  left: 1189px;
  top: 0;
  bottom: 0;
  width: 1px;
  background: #dcdcdc;
}
.bot-right {
  display: flex;
  align-items: center;
  gap: 7px;
  padding: 0 3px 0 12px;
}
.strip {
  height: 3px;
  flex: none;
  background: #1c2a38;
  padding-left: 52px;
}
.strip-light {
  width: 366px;
  height: 100%;
  background: #e4e4e4;
}
</style>
